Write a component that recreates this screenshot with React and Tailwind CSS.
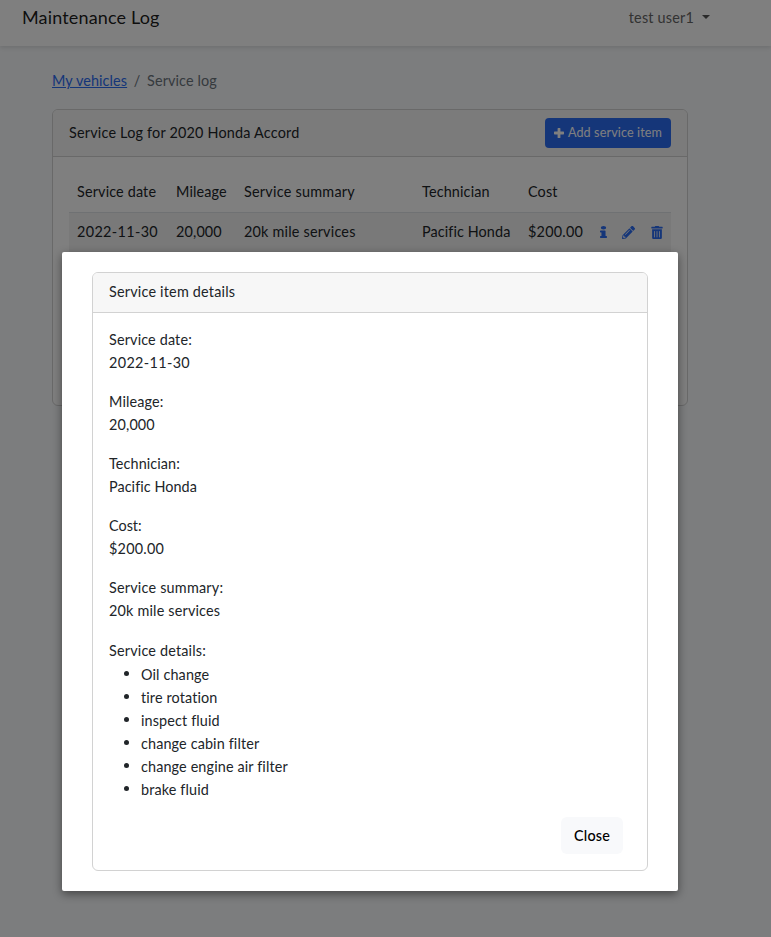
import { FaInfo, FaTrashAlt } from "react-icons/fa";

const DETAILS = [
  ["Service date:", "2022-11-30", "tracking-[0.15px]", "tracking-[0.36px]"],
  ["Mileage:", "20,000", "tracking-[0.15px]", "tracking-[0.14px]"],
  ["Technician:", "Pacific Honda", "tracking-[0.1px]", "tracking-[0.06px]"],
  ["Cost:", "$200.00", "tracking-[0px]", "tracking-[0.24px]"],
  ["Service summary:", "20k mile services", "tracking-[0.21px]", "tracking-[0.18px]"],
];

const ITEMS = [
  "Oil change",
  "tire rotation",
  "inspect fluid",
  "change cabin filter",
  "change engine air filter",
  "brake fluid",
];

function Pencil() {
  return (
    <svg viewBox="0 0 512 512" className="h-[13px] w-[13px]" fill="currentColor">
      <path d="M498 142l-46 46c-5 5-12 5-17 0L324 77c-5-5-5-12 0-17l46-46c19-19 49-19 68 0l60 60c19 19 19 49 0 68zM284 100L22 362 0 484c-3 16 12 31 28 28l122-22 262-262c5-5 5-12 0-17L301 100c-5-5-12-5-17 0zM124 340c-5-6-5-14 0-20l154-154c6-5 14-5 20 0s5 14 0 20L144 340c-6 5-14 5-20 0zm-36 84h48v36l-65 12-31-31 12-65h36v48z" />
    </svg>
  );
}

function Plus() {
  return (
    <svg viewBox="0 0 10 10" className="h-[10px] w-[10px]" fill="currentColor">
      <path d="M4.2 0h1.6q.6 0 .6.6v3h3q.6 0 .6.6v1.6q0 .6-.6.6h-3v3q0 .6-.6.6H4.2q-.6 0-.6-.6v-3h-3Q0 6.400 0 5.800V4.200q0-.6.6-.6h3v-3q0-.6.6-.6z" />
    </svg>
  );
}

function ServiceTable() {
  const cols = "grid grid-cols-[99px_68px_178px_106px_72px_22px_29px_28px] items-center";
  return (
    <div className="w-[602px]">
      <div className={`${cols} h-10 border-b border-[#dee2e6] pb-px *:pl-2 tracking-[0.15px]`}>
        <span>Service date</span>
        <span>Mileage</span>
        <span className="tracking-[0.25px]">Service summary</span>
        <span>Technician</span>
        <span>Cost</span>
      </div>
      <div className={`${cols} h-10 border-b border-[#dee2e6] bg-[#f2f2f2] pb-px *:pl-2`}>
        <span className="tracking-[0.36px]">2022-11-30</span>
        <span className="tracking-[0.14px]">20,000</span>
        <span className="tracking-[0.2px]">20k mile services</span>
        <span className="tracking-[0.1px]">Pacific Honda</span>
        <span className="tracking-[0.24px]">$200.00</span>
        <span className="text-[#2b6cf3]"><FaInfo className="h-3 w-[7px]" preserveAspectRatio="none" /></span>
        <span className="text-[#2b6cf3]"><Pencil /></span>
        <span className="text-[#2b6cf3]"><FaTrashAlt className="h-[13px] w-3" /></span>
      </div>
    </div>
  );
}

function DetailsDialog() {
  return (
    <div className="absolute top-[252px] left-[62px] h-[639px] w-[616px] rounded-[2px] bg-white px-[30px] py-5 shadow-[0_3px_10px_rgba(0,0,0,0.45)]">
      <div className="h-[599px] rounded-md border border-[#d2d2d2]">
        <div className="flex h-10 items-center rounded-t-[5px] border-b border-[#d2d2d2] bg-[#f7f7f7] px-4 pb-px tracking-[0.2px]">
          Service item details
        </div>
        <div className="px-4 pt-[15px] pb-4">
          {DETAILS.map(([label, value, a, b]) => (
            <div key={label} className="mb-4">
              <div className={a}>{label}</div>
              <div className={b}>{value}</div>
            </div>
          ))}
          <div className="pt-px tracking-[0.18px]">Service details:</div>
          <ul className="mb-4 pl-8 tracking-[0.13px]">
            {ITEMS.map((item) => (
              <li key={item} className="-ml-[17px] flex items-center">
                <span className="mr-[12px] mb-px size-[5px] rounded-full bg-[#212529]" />
                {item}
              </li>
            ))}
          </ul>
          <div className="flex justify-end pr-2">
            <button className="h-[37px] w-[62px] rounded-md bg-[#f8f9fb] font-medium tracking-[0.2px] text-black">Close</button>
          </div>
        </div>
      </div>
    </div>
  );
}

export default function App() {
  return (
    <div className="relative h-[937px] w-[771px] overflow-hidden bg-[#f8fafc] font-[Lato,sans-serif] text-[14.4px] leading-[23.04px] text-[#212529]">
      <nav className="flex h-[46px] items-start justify-between bg-white pr-[61px] pl-[22px] pt-[6px] shadow-[0_2px_4px_rgba(0,0,0,0.1)]">
        <span className="text-[18px] tracking-[0.15px] text-black/90">Maintenance Log</span>
        <span className="flex items-center text-[#666] tracking-[0.2px]">
          test user1
          <span className="ml-2 mb-px border-x-[4.5px] border-t-[4.5px] border-x-transparent border-t-[#555]" />
        </span>
      </nav>
      <main className="px-[52px] pt-[23px]">
        <div className="flex h-10 tracking-[0.1px] text-[#6c757d]">
          <a className="text-[#2b6cf3] underline">My vehicles</a>
          <span className="w-5 text-center">/</span>
          <span>Service log</span>
        </div>
        <section className="h-[297px] w-[636px] rounded-md border border-[#d2d2d2] bg-white">
          <div className="flex h-[47px] items-center justify-between rounded-t-[5px] border-b border-[#d2d2d2] bg-[#f7f7f7] px-4">
            <span className="tracking-[0.2px]">Service Log for 2020 Honda Accord</span>
            <button className="flex h-[30px] w-[126px] items-center justify-center gap-1 rounded-[4px] bg-[#2b6cf3] text-[12.6px] tracking-[0.12px] text-white">
              <Plus />
              Add service item
            </button>
          </div>
          <div className="p-4">
            <ServiceTable />
          </div>
        </section>
      </main>
      <div className="absolute inset-0 bg-black/50" />
      <DetailsDialog />
    </div>
  );
}
